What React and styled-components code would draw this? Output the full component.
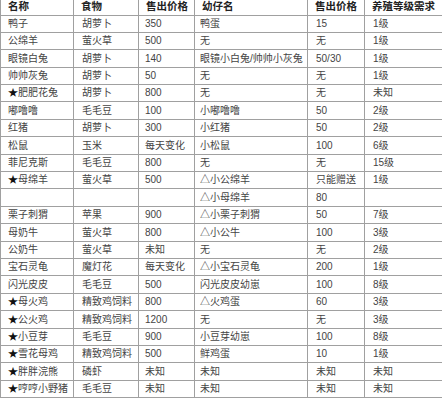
import React from "react";
import styled, { createGlobalStyle } from "styled-components";

const Global = createGlobalStyle`
  html, body { margin: 0; padding: 0; background: #fff; }
  body { width: 442px; height: 400px; overflow: hidden; }
`;

const Page = styled.div`
  width: 442px;
  height: 400px;
  overflow: hidden;
  background: #fff;
`;

const Table = styled.table`
  width: 442px;
  margin-top: -3px;
  table-layout: fixed;
  border-collapse: collapse;
  font-family: "Liberation Sans", "Noto Sans CJK SC", sans-serif;
  font-size: 10px;
  color: #444;
`;

const Row = styled.tr`
  height: ${(p) => (p.$tall ? 18 : 17)}px;
`;

const Head = styled.th`
  border: 1px solid #a0a0a0;
  padding: 0 0 0 7px;
  text-align: left;
  font-weight: bold;
  font-size: 10.5px;
  color: #222;
  white-space: nowrap;
  overflow: hidden;
  line-height: 1;
`;

const Cell = styled.td`
  border: 1px solid #a0a0a0;
  padding: 0 0 0 ${(p) => (p.$pad ? p.$pad : 7)}px;
  white-space: nowrap;
  overflow: hidden;
  line-height: 1;
`;

const Star = styled.span`
  color: #111;
  font-size: 10px;
`;

const widths = [73, 65, 56, 113, 57, 78];
const headers = ["名称", "食物", "售出价格", "幼仔名", "售出价格", "养殖等级需求"];
const pads = [7, 8, 6, 5, 8, 8];

const rows = [
  ["鸭子", "胡萝卜", "350", "鸭蛋", "15", "1级"],
  ["公绵羊", "萤火草", "500", "无", "无", "1级"],
  ["眼镜白兔", "胡萝卜", "140", "眼镜小白兔/帅帅小灰兔", "50/30", "1级"],
  ["帅帅灰兔", "胡萝卜", "50", "无", "无", "1级"],
  ["★肥肥花兔", "胡萝卜", "800", "无", "无", "未知"],
  ["嘟噜噜", "毛毛豆", "100", "小嘟噜噜", "50", "2级"],
  ["红猪", "胡萝卜", "300", "小红猪", "50", "2级"],
  ["松鼠", "玉米", "每天变化", "小松鼠", "100", "6级"],
  ["菲尼克斯", "毛毛豆", "800", "无", "无", "15级"],
  ["★母绵羊", "萤火草", "500", "△小公绵羊", "只能赠送", "1级"],
  ["", "", "", "△小母绵羊", "80", ""],
  ["栗子刺猬", "苹果", "900", "△小栗子刺猬", "50", "7级"],
  ["母奶牛", "萤火草", "800", "△小公牛", "100", "3级"],
  ["公奶牛", "萤火草", "未知", "无", "无", "2级"],
  ["宝石灵龟", "魔灯花", "每天变化", "△小宝石灵龟", "200", "1级"],
  ["闪光皮皮", "毛毛豆", "500", "闪光皮皮幼崽", "100", "8级"],
  ["★母火鸡", "精致鸡饲料", "800", "△火鸡蛋", "60", "3级"],
  ["★公火鸡", "精致鸡饲料", "1200", "无", "无", "3级"],
  ["★小豆芽", "毛毛豆", "900", "小豆芽幼崽", "100", "8级"],
  ["★雪花母鸡", "精致鸡饲料", "500", "鲜鸡蛋", "10", "1级"],
  ["★胖胖浣熊", "磷虾", "未知", "未知", "未知", "未知"],
  ["★哼哼小野猪", "毛毛豆", "未知", "未知", "未知", "未知"],
];

const isTall = (i) => (i * 9) % 23 < 9;

function renderText(t) {
  if (t.startsWith("★")) {
    return (
      <>
        <Star>★</Star>
        {t.slice(1)}
      </>
    );
  }
  return t;
}

export default function App() {
  return (
    <Page>
      <Global />
      <Table>
        <colgroup>
          {widths.map((w, i) => (
            <col key={i} style={{ width: w }} />
          ))}
        </colgroup>
        <thead>
          <Row $tall={isTall(0)}>
            {headers.map((h, i) => (
              <Head key={i}>{h}</Head>
            ))}
          </Row>
        </thead>
        <tbody>
          {rows.map((r, ri) => (
            <Row key={ri} $tall={isTall(ri + 1)}>
              {r.map((c, ci) => (
                <Cell key={ci} $pad={pads[ci]}>
                  {renderText(c)}
                </Cell>
              ))}
            </Row>
          ))}
        </tbody>
      </Table>
    </Page>
  );
}
